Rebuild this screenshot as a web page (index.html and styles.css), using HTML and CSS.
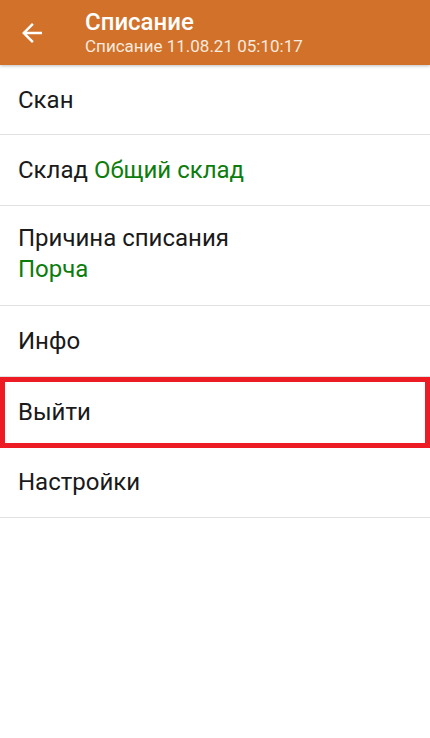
FILE: index.html
```html
<!DOCTYPE html>
<html lang="ru">
<head>
  <meta charset="UTF-8" />
  <meta name="viewport" content="width=device-width, initial-scale=1.0"/>
  <title>Списание</title>
  <link rel="stylesheet" href="styles.css">
</head>
<body>
  <header class="toolbar">
    <button class="back" aria-label="Назад">
      <svg width="30" height="30" viewBox="0 0 24 24"><path d="M20 11H7.83l5.59-5.59L12 4l-8 8 8 8 1.41-1.41L7.83 13H20v-2z" fill="#fff"/></svg>
    </button>
    <div class="titles">
      <h1>Списание</h1>
      <div class="subtitle">Списание 11.08.21 05:10:17</div>
    </div>
  </header>

  <ul class="menu">
    <li class="item">Скан</li>
    <li class="item">Склад <span class="value">Общий склад</span></li>
    <li class="item tall">Причина списания<span class="value block">Порча</span></li>
    <li class="item">Инфо</li>
    <li class="item marked">Выйти</li>
    <li class="item">Настройки</li>
  </ul>
</body>
</html>
```

FILE: styles.css
```css
* { box-sizing: border-box; margin: 0; padding: 0; }
body {
  background: #fff;
  font-family: Roboto, "Noto Sans", sans-serif;
  color: #1a1a1a;
}
.toolbar {
  height: 65px;
  background: #d2712a;
  display: flex;
  align-items: center;
  box-shadow: 0 1px 3px rgba(0,0,0,0.25);
  position: relative;
}
.back {
  width: 64px;
  height: 65px;
  background: none;
  border: none;
  display: flex;
  align-items: center;
  justify-content: center;
  padding-top: 1px;
}
.titles {
  padding-left: 21px;
  color: #fff;
  padding-bottom: 1px;
}
.titles h1 {
  font-size: 24px;
  font-weight: 500;
  line-height: 27px;
}
.subtitle {
  font-size: 17px;
  line-height: 20px;
  color: #f6eadf;
}
.menu { list-style: none; }
.item {
  height: 70.4px;
  padding: 0 18px;
  display: flex;
  align-items: center;
  font-size: 24px;
  border-bottom: 1px solid #e2e2e2;
}
.item.tall {
  height: 100.6px;
  flex-direction: column;
  align-items: flex-start;
  justify-content: center;
  line-height: 31px;
  padding-bottom: 4px;
}
.value { color: #0c7d0c; margin-left: 6px; }
.value.block { margin-left: 0; }
.item.marked {
  border: 5px solid #ed1c24;
  padding-left: 13px;
  height: 71.4px;
  margin-bottom: -1px;
}
```
